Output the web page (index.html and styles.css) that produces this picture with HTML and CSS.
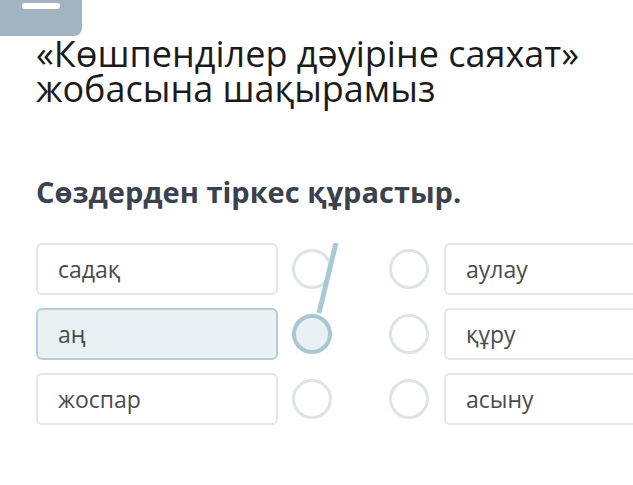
FILE: index.html
```html
<!DOCTYPE html>
<html lang="kk">
<head>
<meta charset="utf-8">
<link rel="stylesheet" href="styles.css">
</head>
<body>
<div class="badge"><span class="badge-bar"></span></div>
<main class="content">
  <h1 class="title">«Көшпенділер дәуіріне саяхат» жобасына шақырамыз</h1>
  <h2 class="task">Сөздерден тіркес құрастыр.</h2>
  <div class="match">
    <div class="col cards">
      <div class="card">садақ</div>
      <div class="card selected">аң</div>
      <div class="card">жоспар</div>
    </div>
    <div class="col dots">
      <span class="dot"></span>
      <span class="dot active"></span>
      <span class="dot"></span>
    </div>
    <div class="col dots">
      <span class="dot"></span>
      <span class="dot"></span>
      <span class="dot"></span>
    </div>
    <div class="col cards">
      <div class="card">аулау</div>
      <div class="card">құру</div>
      <div class="card">асыну</div>
    </div>
    <svg class="drag-line" width="633" height="200" viewBox="0 0 633 200">
      <line x1="319" y1="70" x2="336" y2="0" stroke="#a9c8d4" stroke-width="5" stroke-linecap="butt"/>
    </svg>
  </div>
</main>
</body>
</html>
```
FILE: styles.css
```css
html, body {
  margin: 0;
  padding: 0;
  background: #ffffff;
  overflow: hidden;
  width: 633px;
  height: 485px;
  font-family: "Open Sans", "Noto Sans", sans-serif;
}
.badge {
  width: 82px;
  height: 36px;
  background: #a2b4c1;
  border-bottom-right-radius: 8px;
  position: relative;
}
.badge-bar {
  position: absolute;
  left: 22px;
  top: 3px;
  width: 38px;
  height: 6px;
  border-radius: 3px;
  background: #ffffff;
}
.content {
  padding-left: 36px;
}
.title {
  margin: 0;
  font-size: 36px;
  line-height: 35px;
  font-weight: 400;
  color: #1b1b1b;
  width: 590px;
}
.task {
  margin: 68px 0 0 0;
  font-size: 29px;
  line-height: 36px;
  font-weight: 700;
  color: #3b424d;
}
.match {
  position: relative;
  display: flex;
  margin-top: 33px;
}
.col {
  display: flex;
  flex-direction: column;
  gap: 13px;
}
.cards {
  width: 242px;
  flex: none;
}
.card {
  box-sizing: border-box;
  height: 52px;
  border: 2px solid #e2e6e9;
  border-radius: 6px;
  padding-left: 20px;
  display: flex;
  align-items: center;
  font-size: 23px;
  color: #4b4b4b;
  background: #fff;
}
.card.selected {
  background: #e9f1f5;
  border-color: #b6ced8;
}
.dots {
  width: 40px;
  flex: none;
  margin-left: 14px;
}
.dots + .dots {
  margin-left: 57px;
}
.dots + .cards {
  margin-left: 15px;
}
.dot {
  box-sizing: border-box;
  width: 40px;
  height: 40px;
  margin: 6px 0;
  border-radius: 50%;
  border: 3px solid #dfe3e6;
  background: #fff;
}
.dot.active {
  background: #e9f0f4;
  border: 4px solid #a9c6d1;
}
.drag-line {
  position: absolute;
  left: -36px;
  top: 0;
  pointer-events: none;
}
```
